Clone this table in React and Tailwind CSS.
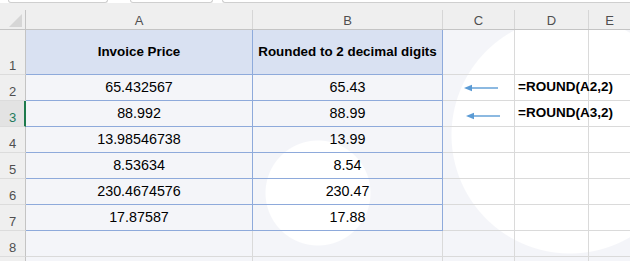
import React from 'react';

const cols = 'grid grid-cols-[26px_227px_190px_72px_74px_1fr]';

const values = [
    ['65.432567', '65.43', '=ROUND(A2,2)'],
    ['88.992', '88.99', '=ROUND(A3,2)'],
    ['13.98546738', '13.99'],
    ['8.53634', '8.54'],
    ['230.4674576', '230.47'],
    ['17.87587', '17.88'],
];

// left pointing arrow in column C
const Arrow = ({ offset }) => (
    <svg width="36" height="8" viewBox="0 0 36 8" className={offset}>
        <path d="M0 4 L8 0.8 L8 7.2 Z" fill="#5b9bd5" />
        <line x1="6" y1="4" x2="34" y2="4" stroke="#5b9bd5" strokeWidth="1.4" />
    </svg>
);

const RowHead = ({ n, active }) => (
    <div
        className={`flex items-end justify-center leading-[16px] text-[13px] ${active
            ? 'bg-[#e3e3e3] border-r-2 border-r-[#1d7a4c] text-[#1d7a5c] pl-[1px]'
            : 'bg-[#efefef] border-r border-r-[#c4c4c4] text-[#4f4f4f]'
            } border-b border-b-[#dcdcdc]`}
    >
        {n}
    </div>
);

const App = () => {
    return (
        <div className="w-[630px] h-[261px] overflow-hidden bg-white font-['Liberation_Sans',Arial,sans-serif] text-black">
            {/* ribbon bottom */}
            <div className="h-[3px] flex bg-white">
                <div className="ml-[8px] w-[100px] h-[3px] border-x border-b border-[#cfcfcf] rounded-b-[4px]" />
                <div className="ml-[22px] w-[83px] h-[3px] border-x border-b border-[#cfcfcf] rounded-b-[4px]" />
                <div className="ml-[9px] flex-1 h-[3px] border-l border-b border-[#cfcfcf] rounded-bl-[4px]" />
            </div>

            {/* Column headers */}
            <div className={`${cols} h-[27px] bg-[#efefef] border-b border-[#c4c4c4] pt-[7px] text-[13px] leading-[16px] text-[#4f4f4f]`}>
                <div className="border-r border-[#c4c4c4] flex items-end justify-end pr-[3px] pb-[2px]">
                    <svg width="13" height="13" viewBox="0 0 13 13">
                        <path d="M13 0 L13 13 L0 13 Z" fill="#d6d6d6" />
                    </svg>
                </div>
                {['A', 'B', 'C', 'D', 'E'].map((c, i) => (
                    <div key={c} className={`flex items-center justify-center pt-[3px] ${i < 4 ? 'border-r border-[#d6d6d6]' : ''}`}>
                        {c}
                    </div>
                ))}
            </div>

            {/* Sheet body */}
            <div className="bg-[#f4f5f9] bg-[radial-gradient(circle_at_570px_105px,#ffffff_118px,transparent_119px),radial-gradient(circle_at_318px_163px,#ffffff_52px,transparent_53px)]">
                {/* Row 1 */}
                <div className={`${cols} h-[45px]`}>
                    <RowHead n={1} />
                    <div className="bg-[#d9e1f2] border-r border-b border-[#8eaadb] flex items-center justify-center font-bold text-[13.4px] whitespace-nowrap">
                        Invoice Price
                    </div>
                    <div className="bg-[#d9e1f2] border-r border-b border-[#8eaadb] flex items-center justify-center font-bold text-[13.4px] whitespace-nowrap">
                        Rounded to 2 decimal digits
                    </div>
                    <div className="border-r border-b border-[#dadada]" />
                    <div className="border-r border-b border-[#dadada]" />
                    <div className="border-b border-[#dadada]" />
                </div>

                {values.map((v, i) => (
                    <div key={i} className={`${cols} h-[26px] text-[14.3px]`}>
                        <RowHead n={i + 2} active={i === 1} />
                        <div className="border-r border-b border-[#8eaadb] flex items-center justify-center">{v[0]}</div>
                        <div className="border-r border-b border-[#8eaadb] flex items-center justify-center">{v[1]}</div>
                        <div className="border-r border-b border-[#dadada] flex items-center">
                            {v[2] && <Arrow offset={i === 0 ? 'ml-[21px]' : 'ml-[23px] mt-[4px]'} />}
                        </div>
                        <div className="border-r border-b border-[#dadada] flex items-center pl-[3px]">
                            {v[2] && (
                                <span className="whitespace-nowrap font-bold text-[13.5px]">
                                    {v[2]}
                                </span>
                            )}
                        </div>
                        <div className="border-b border-[#dadada]" />
                    </div>
                ))}

                {[8, null].map((n, i) => (
                    <div key={i} className={`${cols} h-[26px]`}>
                        <RowHead n={n} />
                        <div className="border-r border-b border-[#dadada]" />
                        <div className="border-r border-b border-[#dadada]" />
                        <div className="border-r border-b border-[#dadada]" />
                        <div className="border-r border-b border-[#dadada]" />
                        <div className="border-b border-[#dadada]" />
                    </div>
                ))}
            </div>
        </div>
    );
};

export default App;
